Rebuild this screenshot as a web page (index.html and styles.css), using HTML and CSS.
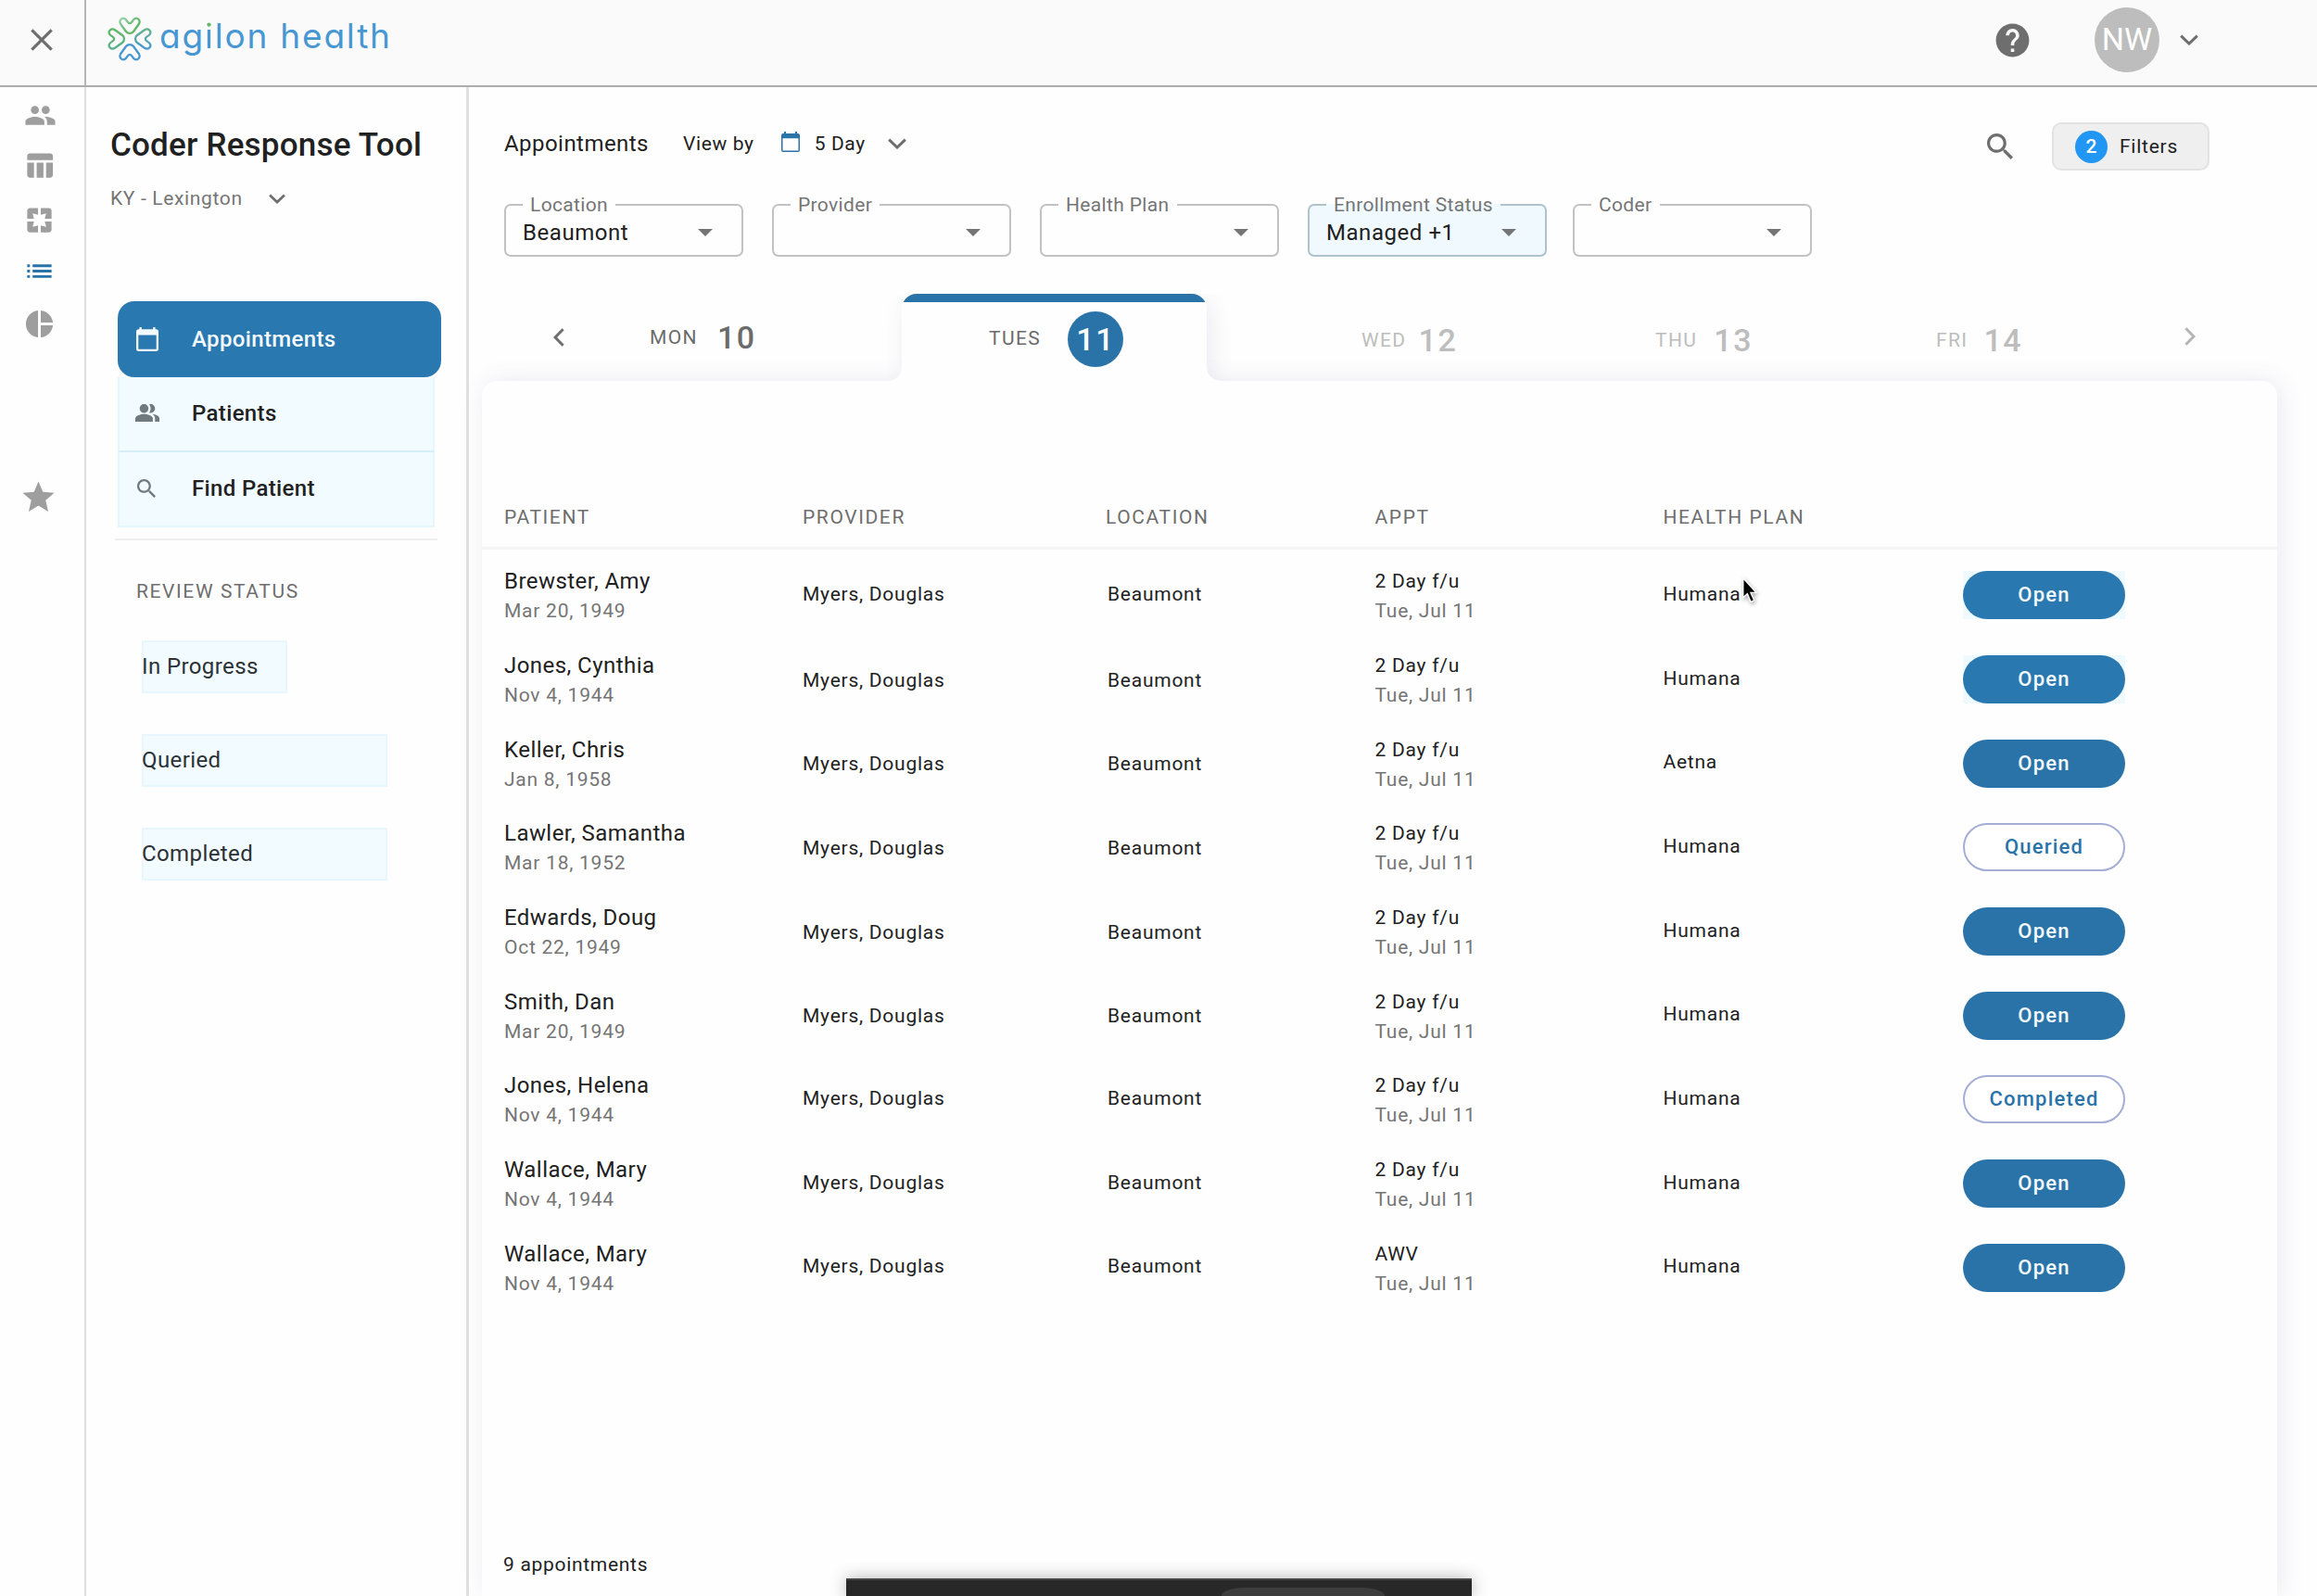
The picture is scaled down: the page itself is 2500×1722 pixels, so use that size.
FILE: index.html
```html
<!DOCTYPE html>
<html lang="en">

<head>
    <meta charset="UTF-8">
    <meta name="viewport" content="width=device-width, initial-scale=1.0">
    <title>Coder Response Tool</title>
    <link rel="stylesheet" href="styles.css">
</head>

<body>

    <!-- Top bar -->
    <header class="topbar">
        <div class="close-cell">
            <svg class="icon-40" viewBox="0 0 24 24"><path d="M5.6 5.6L18.4 18.4M18.4 5.6L5.6 18.4" fill="none" stroke="#6e6e6e" stroke-width="1.9"/></svg>
        </div>
        <div class="logo">
            <svg class="logo-mark" viewBox="0 0 48 48">
                <defs>
                    <linearGradient id="petal-top" x1="0" y1="0" x2="1" y2="1">
                        <stop offset="0" stop-color="#9bd0ae"/>
                        <stop offset="0.6" stop-color="#5fb865"/>
                    </linearGradient>
                    <linearGradient id="petal-right" x1="0" y1="0" x2="1" y2="0">
                        <stop offset="0" stop-color="#62b487"/>
                        <stop offset="1" stop-color="#4797d2"/>
                    </linearGradient>
                    <linearGradient id="petal-left" x1="1" y1="0" x2="0" y2="0">
                        <stop offset="0" stop-color="#5fb865"/>
                        <stop offset="1" stop-color="#58ae8c"/>
                    </linearGradient>
                </defs>
                <g fill="none" stroke-width="2.3">
                    <path stroke="url(#petal-top)" d="M14.2 8 C11.8 4 15.6 .4 18.8 2.2 C21.3 3.6 21.4 7.2 24 7.2 C26.6 7.2 26.7 3.6 29.2 2.2 C32.4 .4 36.2 4 33.8 8 L28 16 C26 18.6 22 18.6 20 16 Z"/>
                    <path stroke="url(#petal-right)" transform="rotate(90 24 24)" d="M14.2 8 C11.8 4 15.6 .4 18.8 2.2 C21.3 3.6 21.4 7.2 24 7.2 C26.6 7.2 26.7 3.6 29.2 2.2 C32.4 .4 36.2 4 33.8 8 L28 16 C26 18.6 22 18.6 20 16 Z"/>
                    <path stroke="#4797d2" transform="rotate(180 24 24)" d="M14.2 8 C11.8 4 15.6 .4 18.8 2.2 C21.3 3.6 21.4 7.2 24 7.2 C26.6 7.2 26.7 3.6 29.2 2.2 C32.4 .4 36.2 4 33.8 8 L28 16 C26 18.6 22 18.6 20 16 Z"/>
                    <path stroke="url(#petal-left)" transform="rotate(270 24 24)" d="M14.2 8 C11.8 4 15.6 .4 18.8 2.2 C21.3 3.6 21.4 7.2 24 7.2 C26.6 7.2 26.7 3.6 29.2 2.2 C32.4 .4 36.2 4 33.8 8 L28 16 C26 18.6 22 18.6 20 16 Z"/>
                </g>
            </svg>
            <span class="logo-text">ag<span class="green-dot">i</span>lon health</span>
        </div>
        <div class="account">
            <svg class="help" viewBox="0 0 24 24"><path fill="#6e6e6e" d="M12 2C6.48 2 2 6.48 2 12s4.48 10 10 10 10-4.48 10-10S17.52 2 12 2zm1 17h-2v-2h2v2zm2.07-7.75l-.9.92C13.45 12.9 13 13.5 13 15h-2v-.5c0-1.1.45-2.1 1.17-2.83l1.24-1.26c.37-.36.59-.86.59-1.41 0-1.1-.9-2-2-2s-2 .9-2 2H8c0-2.21 1.79-4 4-4s4 1.79 4 4c0 .88-.36 1.68-.93 2.25z"/></svg>
            <div class="avatar">NW</div>
            <svg class="chevron" viewBox="0 0 20 12"><path d="M1.2 1.6L10 10L18.8 1.6"/></svg>
        </div>
    </header>

    <div class="layout">

        <!-- Icon rail -->
        <nav class="rail">
            <svg class="rail-people" viewBox="0 0 24 24"><path d="M16 11c1.66 0 2.99-1.34 2.99-3S17.66 5 16 5c-1.66 0-3 1.34-3 3s1.34 3 3 3zm-8 0c1.66 0 2.99-1.34 2.99-3S9.66 5 8 5C6.34 5 5 6.34 5 8s1.34 3 3 3zm0 2c-2.33 0-7 1.17-7 3.5V19h14v-2.5c0-2.33-4.67-3.5-7-3.5zm8 0c-.29 0-.62.02-.97.05 1.16.84 1.97 1.97 1.97 3.45V19h6v-2.5c0-2.33-4.67-3.5-7-3.5z"/></svg>
            <svg class="rail-table" viewBox="0 0 24 24"><path d="M10 10.02h5V21h-5V10.02zM17 21h3c1.1 0 2-.9 2-2v-9h-5v11zm3-18H5c-1.1 0-2 .9-2 2v3h19V5c0-1.1-.9-2-2-2zM3 19c0 1.1.9 2 2 2h3V10H3v9z"/></svg>
            <svg class="rail-pages" viewBox="0 0 24 24"><path d="M3 5v6h5L7 7l4 1V3H5c-1.1 0-2 .9-2 2zm5 8H3v6c0 1.1.9 2 2 2h6v-5l-4 1 1-4zm9 4l-4-1v5h6c1.1 0 2-.9 2-2v-6h-5l1 4zm2-14h-6v5l4-1-1 4h5V5c0-1.1-.9-2-2-2z"/></svg>
            <svg class="rail-list" viewBox="0 0 24 24"><path d="M3 13h2v-2H3v2zm0 4h2v-2H3v2zm0-8h2V7H3v2zm4 4h14v-2H7v2zm0 4h14v-2H7v2zM7 7v2h14V7H7z"/></svg>
            <svg class="rail-pie" viewBox="0 0 24 24"><path d="M11 2v20c-5.07-.5-9-4.79-9-10s3.93-9.5 9-10zm2.03 0v8.99H22c-.47-4.74-4.24-8.52-8.97-8.99zm0 11.01V22c4.74-.47 8.5-4.25 8.97-8.99h-8.97z"/></svg>
            <svg class="rail-star" viewBox="0 0 24 24"><path d="M12 17.27L18.18 21l-1.64-7.03L22 9.24l-7.19-.61L12 2 9.19 8.63 2 9.24l5.46 4.73L5.82 21z"/></svg>
        </nav>

        <!-- Sidebar -->
        <aside class="sidebar">
            <h1>Coder Response Tool</h1>
            <div class="market">
                <span>KY - Lexington</span>
                <svg class="chevron small" viewBox="0 0 20 12"><path d="M1.2 1.6L10 10L18.8 1.6"/></svg>
            </div>

            <div class="menu">
                <div class="menu-item active">
                    <svg viewBox="0 0 24 26"><path fill="#f4fbff" fill-rule="evenodd" d="M3.5 0h2.3v2.2h12.4V0h2.3v2.2h.8A2.7 2.7 0 0 1 24 4.9V23.3A2.7 2.7 0 0 1 21.3 26H2.7A2.7 2.7 0 0 1 0 23.3V4.9A2.7 2.7 0 0 1 2.7 2.2h.8zM2.3 8.5V23.7H21.7V8.5z"/></svg>
                    <span>Appointments</span>
                </div>
                <div class="menu-item">
                    <svg viewBox="0 0 22 16"><path fill="#70797e" d="M15.67 9.13C17.04 10.06 18 11.32 18 13v3h4v-3c0-2.18-3.57-3.47-6.33-3.87zM14 8c2.21 0 4-1.79 4-4s-1.79-4-4-4c-.47 0-.91.1-1.33.24C13.5 1.27 14 2.58 14 4s-.5 2.73-1.33 3.76c.42.14.86.24 1.33.24zM8 8c2.21 0 4-1.79 4-4s-1.79-4-4-4-4 1.79-4 4 1.79 4 4 4zM8 9c-2.67 0-8 1.34-8 4v3h16v-3c0-2.66-5.33-4-8-4z"/></svg>
                    <span>Patients</span>
                </div>
                <div class="menu-item">
                    <svg class="find" viewBox="3 3 17.5 17.5"><path fill="#70797e" d="M15.5 14h-.79l-.28-.27C15.41 12.59 16 11.11 16 9.5 16 5.91 13.09 3 9.5 3S3 5.91 3 9.5 5.91 16 9.5 16c1.61 0 3.09-.59 4.23-1.57l.27.28v.79l5 4.99L20.49 19l-4.99-5zm-6 0C7.01 14 5 11.99 5 9.5S7.01 5 9.5 5 14 7.01 14 9.5 11.99 14 9.5 14z"/></svg>
                    <span>Find Patient</span>
                </div>
            </div>

            <h2>REVIEW STATUS</h2>
            <div class="status-list">
                <div class="status-link short">In Progress</div>
                <div class="status-link">Queried</div>
                <div class="status-link">Completed</div>
            </div>
        </aside>

        <!-- Appointments -->
        <main class="main">
            <div class="toolbar">
                <span class="toolbar-title">Appointments</span>
                <span class="view-by">View by</span>
                <svg class="calendar" viewBox="0 0 20 22"><path fill="#2a73a8" fill-rule="evenodd" d="M3 0h2v2h10V0h2v2h1a2 2 0 0 1 2 2V20a2 2 0 0 1-2 2H2a2 2 0 0 1-2-2V4A2 2 0 0 1 2 2h1zM1.5 7.2V20.5h17V7.2z"/></svg>
                <span class="range">5 Day</span>
                <svg class="chevron" viewBox="0 0 20 12"><path d="M1.2 1.6L10 10L18.8 1.6"/></svg>
                <svg class="search" viewBox="3 3 17.5 17.5"><path fill="#6e6e6e" d="M15.5 14h-.79l-.28-.27C15.41 12.59 16 11.11 16 9.5 16 5.91 13.09 3 9.5 3S3 5.91 3 9.5 5.91 16 9.5 16c1.61 0 3.09-.59 4.23-1.57l.27.28v.79l5 4.99L20.49 19l-4.99-5zm-6 0C7.01 14 5 11.99 5 9.5S7.01 5 9.5 5 14 7.01 14 9.5 11.99 14 9.5 14z"/></svg>
                <div class="filters-btn">
                    <span class="count">2</span>
                    <span>Filters</span>
                </div>
            </div>

            <div class="selects">
                <fieldset class="select">
                    <legend>Location</legend>
                    <div class="select-value"><span>Beaumont</span><i class="caret"></i></div>
                </fieldset>
                <fieldset class="select">
                    <legend>Provider</legend>
                    <div class="select-value"><span></span><i class="caret"></i></div>
                </fieldset>
                <fieldset class="select">
                    <legend>Health Plan</legend>
                    <div class="select-value"><span></span><i class="caret"></i></div>
                </fieldset>
                <fieldset class="select highlighted">
                    <legend>Enrollment Status</legend>
                    <div class="select-value"><span>Managed +1</span><i class="caret"></i></div>
                </fieldset>
                <fieldset class="select last">
                    <legend>Coder</legend>
                    <div class="select-value"><span></span><i class="caret"></i></div>
                </fieldset>
            </div>

            <div class="days">
                <div class="day mon">
                    <svg class="arrow" viewBox="0 0 12 20"><path stroke="#6e6e6e" d="M10.6 1.2L2 10L10.6 18.8"/></svg>
                    <span class="day-name">MON</span><span class="day-num">10</span>
                </div>
                <div class="day tues">
                    <span class="day-name">TUES</span><span class="day-num">11</span>
                </div>
                <div class="day next wed"><span class="day-name">WED</span><span class="day-num">12</span></div>
                <div class="day next thu"><span class="day-name">THU</span><span class="day-num">13</span></div>
                <div class="day next fri"><span class="day-name">FRI</span><span class="day-num">14</span></div>
                <div class="day-arrow">
                    <svg class="arrow" viewBox="0 0 12 20"><path stroke="#b4b4b4" d="M1.4 1.2L10 10L1.4 18.8"/></svg>
                </div>
            </div>

            <section class="panel">
                <div class="row head">
                    <div>PATIENT</div>
                    <div>PROVIDER</div>
                    <div>LOCATION</div>
                    <div>APPT</div>
                    <div>HEALTH PLAN</div>
                </div>
                <div class="rows">
                    <div class="row">
                        <div class="two"><b>Brewster, Amy</b><small>Mar 20, 1949</small></div>
                        <div class="cell">Myers, Douglas</div>
                        <div class="cell loc">Beaumont</div>
                        <div class="two appt"><span>2 Day f/u</span><small>Tue, Jul 11</small></div>
                        <div class="cell plan">Humana</div>
                        <div class="action tinted"><button class="btn">Open</button></div>
                    </div>
                    <div class="row">
                        <div class="two"><b>Jones, Cynthia</b><small>Nov 4, 1944</small></div>
                        <div class="cell">Myers, Douglas</div>
                        <div class="cell loc">Beaumont</div>
                        <div class="two appt"><span>2 Day f/u</span><small>Tue, Jul 11</small></div>
                        <div class="cell plan">Humana</div>
                        <div class="action tinted"><button class="btn">Open</button></div>
                    </div>
                    <div class="row">
                        <div class="two"><b>Keller, Chris</b><small>Jan 8, 1958</small></div>
                        <div class="cell">Myers, Douglas</div>
                        <div class="cell loc">Beaumont</div>
                        <div class="two appt"><span>2 Day f/u</span><small>Tue, Jul 11</small></div>
                        <div class="cell plan">Aetna</div>
                        <div class="action"><button class="btn">Open</button></div>
                    </div>
                    <div class="row">
                        <div class="two"><b>Lawler, Samantha</b><small>Mar 18, 1952</small></div>
                        <div class="cell">Myers, Douglas</div>
                        <div class="cell loc">Beaumont</div>
                        <div class="two appt"><span>2 Day f/u</span><small>Tue, Jul 11</small></div>
                        <div class="cell plan">Humana</div>
                        <div class="action"><button class="btn outline">Queried</button></div>
                    </div>
                    <div class="row">
                        <div class="two"><b>Edwards, Doug</b><small>Oct 22, 1949</small></div>
                        <div class="cell">Myers, Douglas</div>
                        <div class="cell loc">Beaumont</div>
                        <div class="two appt"><span>2 Day f/u</span><small>Tue, Jul 11</small></div>
                        <div class="cell plan">Humana</div>
                        <div class="action"><button class="btn">Open</button></div>
                    </div>
                    <div class="row">
                        <div class="two"><b>Smith, Dan</b><small>Mar 20, 1949</small></div>
                        <div class="cell">Myers, Douglas</div>
                        <div class="cell loc">Beaumont</div>
                        <div class="two appt"><span>2 Day f/u</span><small>Tue, Jul 11</small></div>
                        <div class="cell plan">Humana</div>
                        <div class="action"><button class="btn">Open</button></div>
                    </div>
                    <div class="row">
                        <div class="two"><b>Jones, Helena</b><small>Nov 4, 1944</small></div>
                        <div class="cell">Myers, Douglas</div>
                        <div class="cell loc">Beaumont</div>
                        <div class="two appt"><span>2 Day f/u</span><small>Tue, Jul 11</small></div>
                        <div class="cell plan">Humana</div>
                        <div class="action"><button class="btn outline">Completed</button></div>
                    </div>
                    <div class="row">
                        <div class="two"><b>Wallace, Mary</b><small>Nov 4, 1944</small></div>
                        <div class="cell">Myers, Douglas</div>
                        <div class="cell loc">Beaumont</div>
                        <div class="two appt"><span>2 Day f/u</span><small>Tue, Jul 11</small></div>
                        <div class="cell plan">Humana</div>
                        <div class="action"><button class="btn">Open</button></div>
                    </div>
                    <div class="row">
                        <div class="two"><b>Wallace, Mary</b><small>Nov 4, 1944</small></div>
                        <div class="cell">Myers, Douglas</div>
                        <div class="cell loc">Beaumont</div>
                        <div class="two appt"><span>AWV</span><small>Tue, Jul 11</small></div>
                        <div class="cell plan">Humana</div>
                        <div class="action"><button class="btn">Open</button></div>
                    </div>
                </div>
                <div class="total">9 appointments</div>
            </section>
        </main>
    </div>

    <!-- Floating dock at the bottom edge -->
    <div class="dock"><div class="dock-pill"></div></div>

    <!-- Mouse pointer -->
    <svg class="pointer" viewBox="0 0 24 34"><path fill="#000" stroke="#fff" stroke-width="1.5" d="M3 2V25L8 20.5L12 30L16 28.3L12 19H18.5Z"/></svg>

</body>

</html>
```

FILE: styles.css
```css
* {
    box-sizing: border-box;
    margin: 0;
    padding: 0;
}

body {
    display: flex;
    flex-direction: column;
    height: 1722px;
    overflow: hidden;
    background-color: #fefefe;
    color: #212121;
    font-family: Roboto, sans-serif;
    font-size: 21px;
    letter-spacing: 0.75px;
}

svg {
    display: block;
    flex: none;
}

/* Top bar */
.topbar {
    display: flex;
    flex: none;
    height: 94px;
    background-color: #fafafb;
    border-bottom: 2px solid #adadad;
}

.close-cell {
    display: flex;
    justify-content: center;
    width: 93px;
    padding-top: 23px;
    padding-right: 2px;
    border-right: 2px solid #b5b5b5;
}

.icon-40 {
    width: 40px;
    height: 40px;
}

.logo {
    display: flex;
    padding: 18px 0 0 23px;
}

.logo-mark {
    width: 48px;
    height: 48px;
}

.logo-text {
    margin-left: 8px;
    color: #4797d2;
    font-family: Inter, sans-serif;
    font-size: 37px;
    font-feature-settings: "cv11";
    line-height: 42px;
    letter-spacing: 1.8px;
}

.green-dot {
    background: linear-gradient(#5fb865 14px, #4797d2 14px);
    -webkit-background-clip: text;
    background-clip: text;
    color: transparent;
}

.account {
    display: flex;
    align-items: center;
    margin-left: auto;
    padding: 0 128px 6px 0;
}

.help {
    width: 43px;
    height: 43px;
    margin-right: 67px;
}

.avatar {
    width: 70px;
    height: 70px;
    margin-right: 22px;
    border-radius: 50%;
    background-color: #bdbdbd;
    color: #fff;
    font-size: 34px;
    line-height: 69px;
    letter-spacing: 0;
    text-align: center;
}

.chevron {
    width: 20px;
    height: 12px;
    fill: none;
    stroke: #6e6e6e;
    stroke-width: 3;
}

.chevron.small {
    width: 18px;
    height: 11px;
}

.layout {
    display: flex;
    flex: 1;
    min-height: 0;
}

/* Icon rail */
.rail {
    display: flex;
    flex: none;
    flex-direction: column;
    width: 93px;
    padding: 13px 0 0 26px;
    border-right: 2px solid #dedede;
    fill: #9e9e9e;
}

.rail svg {
    width: 35px;
    height: 35px;
}

.rail .rail-table {
    margin-top: 19px;
    margin-left: -1px;
}

.rail .rail-pages {
    margin-top: 24px;
    margin-left: -1px;
}

.rail .rail-list {
    margin-top: 20px;
    margin-left: -1px;
    fill: #2a73a8;
}

.rail .rail-pie {
    margin-top: 22px;
    margin-left: -1px;
}

.rail .rail-star {
    width: 41px;
    height: 41px;
    margin-top: 149px;
    margin-left: -5px;
}

/* Sidebar */
.sidebar {
    flex: none;
    width: 413px;
    padding-top: 41px;
    border-right: 3px solid #e0e0e0;
}

.sidebar h1 {
    padding-left: 26px;
    font-size: 35px;
    font-weight: 500;
    line-height: 44px;
    letter-spacing: 0.2px;
}

.market {
    display: flex;
    align-items: center;
    gap: 28px;
    height: 26px;
    margin-top: 22px;
    padding-left: 26px;
    color: #757575;
    letter-spacing: 0.65px;
}

.menu {
    margin: 98px 31px 0;
    padding: 0 3px 12px;
    border-bottom: 2px solid #eee;
}

.menu-item {
    display: flex;
    align-items: center;
    width: 342px;
    height: 81px;
    padding: 0 0 2px 17px;
    background-color: #f2fbff;
    border: 2px solid #e6f6fd;
    border-top: none;
    font-size: 24px;
    font-weight: 500;
    letter-spacing: 0.35px;
}

.menu-item:nth-child(2) {
    border-bottom-color: #d6eef7;
}

.menu-item svg {
    width: 26px;
    height: 19px;
    margin-right: 35px;
}

.menu-item .find {
    width: 20px;
    height: 20px;
    margin-left: 2px;
    margin-right: 39px;
}

.menu-item.active {
    width: 349px;
    height: 82px;
    padding: 0 0 0 20px;
    border: none;
    border-radius: 18px;
    background-color: #2a78b0;
    color: #f4fbff;
}

.menu-item.active span {
    padding-bottom: 1px;
}

.menu-item.active svg {
    width: 24px;
    height: 26px;
    margin-right: 36px;
}

.sidebar h2 {
    margin: 42px 0 40px 54px;
    color: #6e6e6e;
    font-size: 21px;
    font-weight: 400;
    line-height: 26px;
    letter-spacing: 1.6px;
}

.status-list {
    display: flex;
    flex-direction: column;
    gap: 44px;
    padding-left: 60px;
}

.status-link {
    width: 265px;
    height: 57px;
    background-color: #f2fbff;
    box-shadow: inset 0 0 0 2px #e8f6fd;
    color: #2b3136;
    font-size: 24px;
    line-height: 57px;
    letter-spacing: 0.4px;
}

.status-link.short {
    width: 157px;
}

/* Appointments toolbar */
.main {
    display: flex;
    flex: 1;
    flex-direction: column;
    min-width: 0;
    padding-left: 14px;
}

.toolbar {
    display: flex;
    align-items: center;
    height: 113px;
    padding: 9px 116px 0 24px;
}

.toolbar-title {
    margin-right: 37px;
    font-size: 24px;
    letter-spacing: 0.45px;
}

.view-by {
    margin-right: 29px;
    padding-bottom: 1px;
    letter-spacing: 0.65px;
}

.calendar {
    width: 20px;
    height: 22px;
    margin-right: 16px;
    margin-bottom: 4px;
}

.range {
    margin-right: 24px;
    padding-bottom: 1px;
    letter-spacing: 0.6px;
}

.search {
    width: 28px;
    height: 28px;
    margin-top: 5px;
    margin-left: auto;
}

.filters-btn {
    display: flex;
    align-items: center;
    width: 170px;
    height: 52px;
    margin-top: 6px;
    margin-left: 42px;
    padding: 0 0 0 23px;
    background-color: #efefef;
    border: 2px solid #e2e2e2;
    border-radius: 10px;
}

.count {
    width: 35px;
    height: 35px;
    margin-right: 13px;
    border-radius: 50%;
    background-color: #2196f3;
    color: #fff;
    font-weight: 500;
    line-height: 35px;
    letter-spacing: 0;
    text-align: center;
}

/* Filter selects */
.selects {
    display: flex;
    gap: 31px;
    padding-left: 24px;
}

.select {
    width: 258px;
    height: 70px;
    padding: 0 31px 7px 18px;
    border: 2px solid #c2c2c2;
    border-radius: 7px;
}

.select.last {
    margin-left: -3px;
}

.select legend {
    padding: 1px 8px 0 8px;
    color: #757575;
    line-height: 26px;
    letter-spacing: 0.35px;
}

.select-value {
    display: flex;
    align-items: center;
    justify-content: space-between;
    height: 34px;
    font-size: 24px;
    letter-spacing: 0.55px;
}

.select.highlighted {
    background-color: #f0fafe;
    border-color: #aec3cd;
}

.caret {
    border: 8.5px solid transparent;
    border-top-color: #757575;
    border-bottom: none;
}

/* Day tabs */
.days {
    display: grid;
    grid-template-columns: 453px 329px 398px 330px 250px 1fr;
    height: 94px;
    margin-top: 40px;
}

.day {
    display: flex;
    align-items: center;
    color: #6b6b6b;
}

.day-name {
    letter-spacing: 1.4px;
}

.day-num {
    font-size: 34px;
    font-weight: 500;
    letter-spacing: 1.5px;
}

.arrow {
    width: 12px;
    height: 20px;
    fill: none;
    stroke-width: 3;
}

.day.mon {
    padding-left: 77px;
}

.mon .day-name {
    margin-left: 92px;
    margin-right: 21px;
}

.day.tues {
    position: relative;
    z-index: 1;
    padding: 4px 0 0 94px;
    background: linear-gradient(#2a73a8 9px, #fefefe 9px);
    border-radius: 16px 16px 0 0;
    box-shadow: 4px 8px 24px rgba(90, 90, 160, 0.12);
    clip-path: inset(0 -40px 0 -16px);
}

/* Curved feet where the active tab meets the panel */
.day.tues::before,
.day.tues::after {
    content: "";
    position: absolute;
    bottom: 0;
    width: 14px;
    height: 14px;
}

.day.tues::before {
    left: -14px;
    background: radial-gradient(circle at 0 0, transparent 13px, #fefefe 14px);
}

.day.tues::after {
    right: -14px;
    background: radial-gradient(circle at 100% 0, transparent 13px, #fefefe 14px);
}

.tues .day-name {
    margin-right: 29px;
    padding-bottom: 2px;
}

.tues .day-num {
    width: 60px;
    height: 60px;
    border-radius: 50%;
    background-color: #2a73a8;
    color: #fff;
    line-height: 61px;
    text-align: center;
}

.day.next {
    padding-top: 6px;
    color: #bdbdbd;
}

.day.wed {
    padding-left: 167px;
    gap: 13px;
}

.day.thu {
    padding-left: 86px;
    gap: 18px;
}

.day.fri {
    padding-left: 59px;
    gap: 17px;
}

.day-arrow {
    display: flex;
    align-items: center;
    padding-bottom: 3px;
    justify-content: flex-end;
    padding-right: 131px;
}

/* Appointments table */
.panel {
    display: flex;
    flex: 1;
    flex-direction: column;
    width: 1937px;
    background-color: #fefefe;
    border-radius: 16px 16px 0 0;
    box-shadow: 4px 0 26px rgba(90, 90, 160, 0.12);
}

.row {
    display: grid;
    grid-template-columns: 322px 327px 290.5px 311px 323.5px 175px;
    align-items: center;
    height: 90.7px;
    padding-left: 24px;
}

.row.head {
    align-items: end;
    height: 182px;
    padding-bottom: 20px;
    border-bottom: 3px solid #f5f5f5;
    color: #6e6e6e;
    line-height: 24px;
    letter-spacing: 1.6px;
}

.rows {
    padding-top: 4px;
}

.two {
    display: flex;
    flex-direction: column;
    padding-top: 2px;
    line-height: 32px;
}

.two b {
    font-size: 24px;
    font-weight: 400;
    letter-spacing: 0.45px;
}

.two small {
    color: #757575;
    font-size: 21px;
}

.cell {
    padding-bottom: 3px;
}

/* Middle rows sit slightly lower */
.row:nth-child(n+2):nth-child(-n+6) .cell:not(.plan) {
    padding-top: 1px;
    padding-bottom: 0;
}

.loc {
    padding-left: 2px;
}

.btn {
    display: block;
    width: 175px;
    height: 52px;
    padding-bottom: 1px;
    border: none;
    border-radius: 26px;
    background-color: #2a73a8;
    color: #f4fbff;
    font-family: inherit;
    font-size: 22px;
    font-weight: 500;
    letter-spacing: 1.2px;
}

.tinted {
    background-color: #effaff;
}

.tinted .btn {
    background-color: #2a78b0;
}

.btn.outline {
    border: 2px solid #a3add6;
    background-color: #fff;
    color: #2a73a8;
}

.total {
    margin-top: auto;
    padding: 0 0 21px 23px;
    line-height: 26px;
    letter-spacing: 0.7px;
}

/* Overlays */
.dock {
    position: absolute;
    left: 913px;
    top: 1703px;
    width: 675px;
    height: 19px;
    padding: 8px 0 0 405px;
    background-color: #282828;
    border-top: 2px solid #454545;
    box-shadow: 0 0 18px rgba(0, 0, 0, 0.3);
}

.dock-pill {
    width: 176px;
    height: 9px;
    background-color: #3d3d3d;
    border-radius: 24px 24px 0 0 / 9px 9px 0 0;
}

.pointer {
    position: absolute;
    left: 1878px;
    top: 622px;
    width: 22px;
    height: 31px;
    filter: drop-shadow(1px 2px 2px rgba(0, 0, 0, 0.35));
}
```
